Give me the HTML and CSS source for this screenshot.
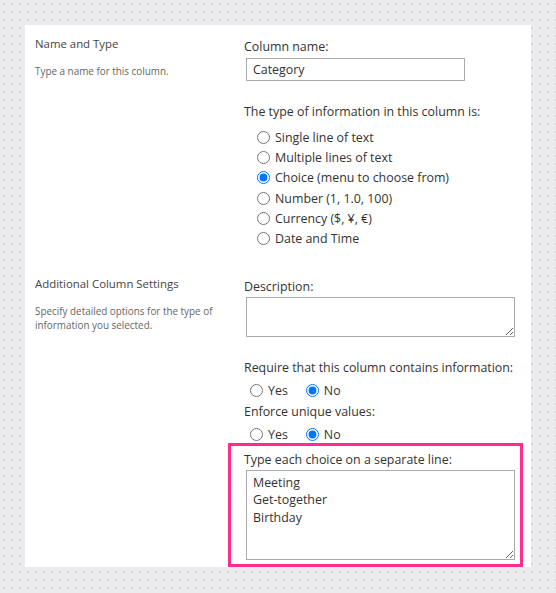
FILE: index.html
```html
<!DOCTYPE html>
<html lang="en">
<head>
    <meta charset="UTF-8">
    <title>Create Column</title>
    <link rel="stylesheet" href="styles.css">
</head>
<body>

    <!-- Settings panel -->
    <div class="panel">

        <!-- Name and Type -->
        <div class="section">
            <div class="section-info">
                <div class="section-title">Name and Type</div>
                <div class="section-desc">Type a name for this column.</div>
            </div>
            <div class="section-body">
                <div class="label">Column name:</div>
                <input class="text-input" type="text" value="Category">

                <div class="label spaced">The type of information in this column is:</div>
                <div class="radio-list">
                    <label class="radio-row"><input type="radio" name="coltype"> Single line of text</label>
                    <label class="radio-row"><input type="radio" name="coltype"> Multiple lines of text</label>
                    <label class="radio-row"><input type="radio" name="coltype" checked> Choice (menu to choose from)</label>
                    <label class="radio-row"><input type="radio" name="coltype"> Number (1, 1.0, 100)</label>
                    <label class="radio-row"><input type="radio" name="coltype"> Currency ($, ¥, €)</label>
                    <label class="radio-row"><input type="radio" name="coltype"> Date and Time</label>
                </div>
            </div>
        </div>

        <!-- Additional Column Settings -->
        <div class="section second">
            <div class="section-info">
                <div class="section-title">Additional Column Settings</div>
                <div class="section-desc">Specify detailed options for the type of information you selected.</div>
            </div>
            <div class="section-body">
                <div class="label">Description:</div>
                <textarea class="desc-box"></textarea>

                <div class="label spaced">Require that this column contains information:</div>
                <div class="radio-inline">
                    <label class="radio-row"><input type="radio" name="required"> Yes</label>
                    <label class="radio-row"><input type="radio" name="required" checked> No</label>
                </div>

                <div class="label">Enforce unique values:</div>
                <div class="radio-inline">
                    <label class="radio-row"><input type="radio" name="unique"> Yes</label>
                    <label class="radio-row"><input type="radio" name="unique" checked> No</label>
                </div>

                <!-- Highlighted choices box -->
                <div class="highlight">
                    <div class="label">Type each choice on a separate line:</div>
                    <textarea class="choices-box">Meeting
Get-together
Birthday</textarea>
                </div>
            </div>
        </div>

    </div>

</body>
</html>
```

FILE: styles.css
```css
/* General Styles */
body {
    margin: 0;
    padding: 25px;
    font-family: "Open Sans", "Liberation Sans", sans-serif;
    color: #333;
    background-color: #ebebed;
    background-image: radial-gradient(circle, #d6d6d9 0.8px, transparent 1px);
    background-size: 8px 8px;
}

/* Panel */
.panel {
    width: 506px;
    height: 542px;
    background: white;
    padding: 10px 0 0 10px;
    box-sizing: border-box;
}

/* Two-column section */
.section {
    display: grid;
    grid-template-columns: 209px 1fr;
}

.section.second {
    margin-top: 26px;
}

.section-title {
    font-size: 11.4px;
    color: #444;
    line-height: 16px;
    margin-top: 1px;
}

.section-desc {
    font-size: 9.9px;
    color: #666;
    line-height: 14px;
    margin-top: 12px;
}

.section-body {
    width: 280px;
    padding-top: 3px;
}

/* Labels */
.label {
    font-size: 12.4px;
    line-height: 18px;
}

.label.spaced {
    margin-top: 22px;
}

/* Inputs */
.text-input {
    display: block;
    margin: 2px 0 0 2px;
    width: 219px;
    height: 23px;
    box-sizing: border-box;
    border: 1px solid #ababab;
    padding: 0 6px;
    font-family: inherit;
    font-size: 12.4px;
    color: #333;
    outline: none;
}

textarea {
    display: block;
    margin: 1px 0 0 2px;
    width: 269px;
    box-sizing: border-box;
    border: 1px solid #ababab;
    font-family: inherit;
    font-size: 12.4px;
    color: #333;
    outline: none;
}

.desc-box {
    height: 40px;
}

.choices-box {
    height: 90px;
    padding: 3px 6px;
    line-height: 17.5px;
}

/* Radios */
.radio-list {
    margin-top: 6px;
    padding-left: 13px;
}

.radio-row {
    display: flex;
    align-items: center;
    height: 20.3px;
    font-size: 12.4px;
}

.radio-row input {
    width: 13px;
    height: 13px;
    margin: 0 5px 0 0;
}

.radio-inline {
    display: flex;
    gap: 18px;
    margin: 4px 0 2px 6px;
}

.radio-inline .radio-row {
    height: 20px;
}

/* Highlight box */
.highlight {
    margin: -4px 0 0 -16px;
    width: 295px;
    box-sizing: border-box;
    border: 3px solid #ff2d8c;
    padding: 5px 0 4px 13px;
}
```
